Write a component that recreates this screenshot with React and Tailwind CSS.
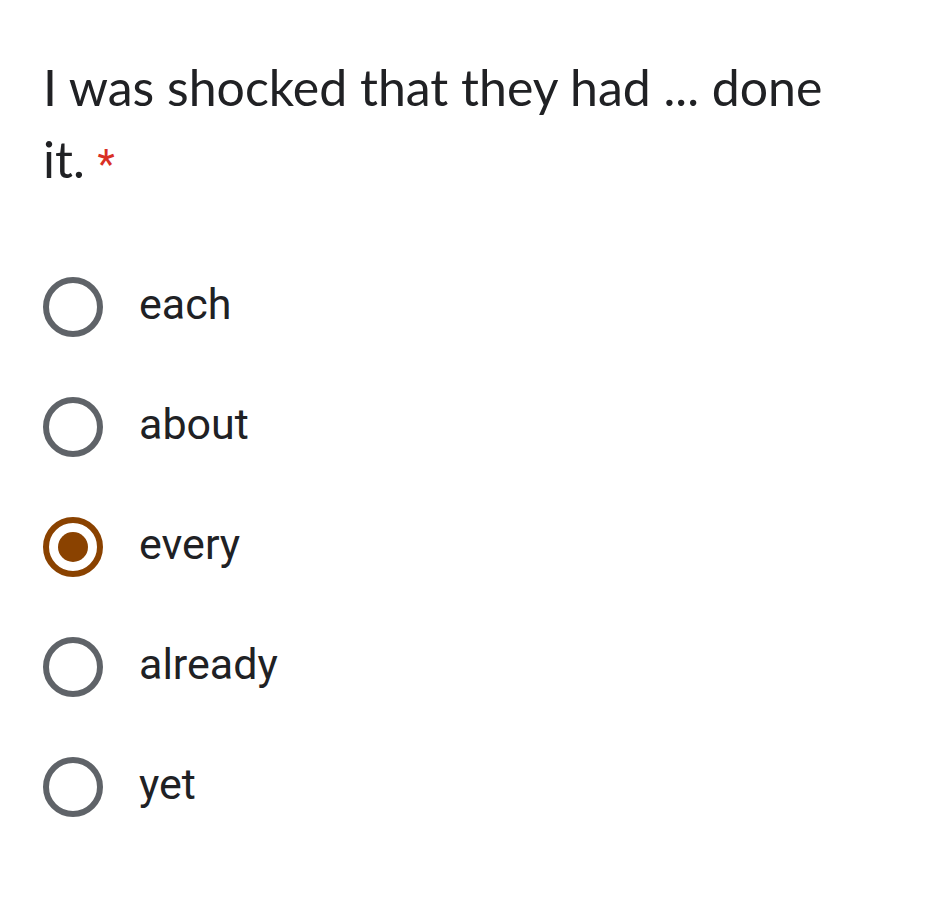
import { useState } from 'react';

const options = ['each', 'about', 'every', 'already', 'yet'];

const Radio = ({ checked }) => (
  <div
    className={`w-[60px] h-[60px] shrink-0 rounded-full border-[6px] flex items-center justify-center ${
      checked ? 'border-[#8a4200]' : 'border-[#5f6368]'
    }`}
  >
    {checked && <div className="w-[30px] h-[30px] rounded-full bg-[#8a4200]" />}
  </div>
);

const App = () => {
  const [selected, setSelected] = useState('every');

  return (
    <div className="min-h-[906px] bg-white pl-[43px] pr-[40px] pt-[51px]">
      {/* Question */}
      <h2 className="max-w-[790px] font-['Lato',sans-serif] text-[50px] leading-[72px] text-[#202124] font-normal">
        I was shocked that they had ... done it.{' '}
        <span className="font-['Roboto',sans-serif] text-[40px] leading-none text-[#d93025]">*</span>
      </h2>

      {/* Options */}
      <div className="mt-[52px] flex flex-col">
        {options.map((opt) => (
          <label
            key={opt}
            onClick={() => setSelected(opt)}
            className="h-[120px] flex items-center cursor-pointer"
          >
            <Radio checked={selected === opt} />
            <span className="ml-[36px] pb-[6px] font-['Roboto',sans-serif] text-[43px] leading-none text-[#202124]">
              {opt}
            </span>
          </label>
        ))}
      </div>
    </div>
  );
};

export default App;
